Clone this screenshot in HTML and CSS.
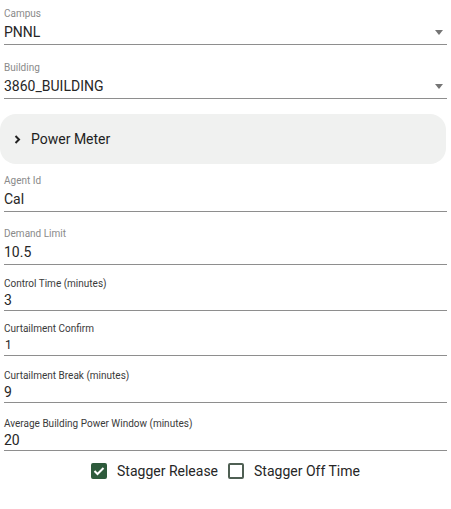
FILE: index.html
```html
<!DOCTYPE html>
<html>
<head>
<meta charset="utf-8">
<link rel="stylesheet" href="styles.css">
</head>
<body>
<div class="form">
  <div class="field a p7">
    <div class="label">Campus</div>
    <div class="value"><span>PNNL</span><span class="arrow"></span></div>
  </div>
  <div class="field a p16">
    <div class="label">Building</div>
    <div class="value"><span>3860_BUILDING</span><span class="arrow"></span></div>
  </div>
  <div class="panel">
    <svg class="chev" width="7" height="9" viewBox="0 0 7 9"><polyline points="1.5,1 5,4.5 1.5,8" fill="none" stroke="#222" stroke-width="2"/></svg>
    <span class="panel-title">Power Meter</span>
  </div>
  <div class="field a p10">
    <div class="label">Agent Id</div>
    <div class="value"><span>Cal</span></div>
  </div>
  <div class="field a p15">
    <div class="label">Demand Limit</div>
    <div class="value"><span>10.5</span></div>
  </div>
  <div class="field b p13">
    <div class="label">Control Time (minutes)</div>
    <div class="value"><span>3</span></div>
  </div>
  <div class="field b p12">
    <div class="label">Curtailment Confirm</div>
    <div class="value small"><span>1</span></div>
  </div>
  <div class="field b p14">
    <div class="label">Curtailment Break (minutes)</div>
    <div class="value"><span>9</span></div>
  </div>
  <div class="field b p15">
    <div class="label">Average Building Power Window (minutes)</div>
    <div class="value"><span>20</span></div>
  </div>
  <div class="checks">
    <label class="check">
      <span class="box on"><svg width="12" height="10" viewBox="0 0 12 10"><polyline points="1.5,5 4.5,8 10.5,2" fill="none" stroke="#fff" stroke-width="2"/></svg></span>
      <span>Stagger Release</span>
    </label>
    <label class="check">
      <span class="box"></span>
      <span>Stagger Off Time</span>
    </label>
  </div>
</div>
</body>
</html>
```

FILE: styles.css
```css
* { box-sizing: border-box; }
html, body { margin: 0; padding: 0; background: #fff; }
body {
  font-family: Roboto, "Liberation Sans", Arial, sans-serif;
  color: #222;
}
.form {
  width: 451px;
  padding: 0 4px;
}
.field {
  border-bottom: 1px solid #8e8e8e;
}
.p7 { padding-top: 7px; }
.p10 { padding-top: 10px; }
.p12 { padding-top: 12px; }
.p13 { padding-top: 13px; }
.p14 { padding-top: 14px; }
.p15 { padding-top: 15px; }
.p16 { padding-top: 16px; }
.label {
  font-size: 10px;
}
.field.a .label { line-height: 14px; color: #8a8a8a; }
.field.a .value { line-height: 23px; height: 23px; }
.field.b .label { line-height: 12px; color: #3a3a3a; }
.field.b .value { line-height: 20px; height: 20px; }
.value {
  font-size: 14px;
  color: #262626;
  display: flex;
  justify-content: space-between;
  align-items: center;
}
.value.small span { font-size: 12px; line-height: 24px; padding-left: 1px; }
.arrow {
  width: 0;
  height: 0;
  border-left: 4.5px solid transparent;
  border-right: 4.5px solid transparent;
  border-top: 5px solid #757575;
  margin-right: 4px;
}
.panel {
  margin: 15px 1px 0 -4px;
  height: 50px;
  background: #f0f1f0;
  border-radius: 16px;
  display: flex;
  align-items: center;
  padding-left: 14px;
  gap: 10px;
}
.chev { display: block; }
.panel-title {
  font-size: 14px;
  color: #1e1e1e;
}
.checks {
  display: flex;
  justify-content: center;
  align-items: center;
  gap: 10px;
  height: 24px;
  margin-top: 8px;
  font-size: 14px;
  color: #262626;
}
.check {
  display: flex;
  align-items: center;
  gap: 10px;
}
.box {
  width: 16px;
  height: 16px;
  border: 2px solid #4f5f53;
  border-radius: 2px;
  display: flex;
  align-items: center;
  justify-content: center;
}
.box.on {
  background: #2e5b3c;
  border-color: #2e5b3c;
}
.box svg { display: block; }
```
